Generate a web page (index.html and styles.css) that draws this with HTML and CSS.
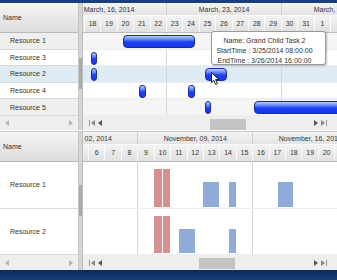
FILE: index.html
```html
<!DOCTYPE html>
<html>
<head>
<meta charset="utf-8">
<link rel="stylesheet" href="styles.css">
</head>
<body>
<div class="app">
  <div class="strip-top"></div>

  <div class="panel panel-top">
    <div class="grid">
      <div class="grid-head">Name</div>
      <div class="grid-rows">
        <div class="grid-row alt">Resource 1</div>
        <div class="grid-row">Resource 3</div>
        <div class="grid-row sel">Resource 2</div>
        <div class="grid-row">Resource 4</div>
        <div class="grid-row alt">Resource 5</div>
      </div>
      <div class="hscroll hscroll-top">
        <svg class="arr" width="4" height="6" viewBox="0 0 4 6"><path d="M4 0L0 3L4 6Z"/></svg>
        <svg class="arr" width="4" height="6" viewBox="0 0 4 6"><path d="M0 0L4 3L0 6Z"/></svg>
      </div>
    </div>
    <div class="vsplit"><div class="vthumb vthumb-top"></div></div>
    <div class="gantt">
      <div class="gview">
        <div class="track track-top">
          <div class="weeks">
            <div class="week">March, 16, 2014</div>
            <div class="week">March, 23, 2014</div>
            <div class="week">March, 30, 2014</div>
          </div>
          <div class="days">
            <div class="day">16</div><div class="day">17</div><div class="day">18</div><div class="day">19</div><div class="day">20</div><div class="day">21</div><div class="day">22</div>
            <div class="day">23</div><div class="day">24</div><div class="day">25</div><div class="day">26</div><div class="day">27</div><div class="day">28</div><div class="day">29</div>
            <div class="day">30</div><div class="day">31</div><div class="day">1</div><div class="day">2</div><div class="day">3</div><div class="day">4</div><div class="day">5</div>
          </div>
          <div class="gbody">
            <div class="grow alt">
              <div class="bar" style="left:71px;width:72px"></div>
            </div>
            <div class="grow">
              <div class="bar pill" style="left:39px;width:6px"></div>
            </div>
            <div class="grow sel">
              <div class="bar pill" style="left:39px;width:6px"></div>
              <div class="bar" style="left:153px;width:22px"></div>
            </div>
            <div class="grow">
              <div class="bar pill" style="left:87px;width:7px"></div>
              <div class="bar pill" style="left:136px;width:7px"></div>
            </div>
            <div class="grow alt">
              <div class="bar pill" style="left:153px;width:6px"></div>
              <div class="bar" style="left:202px;width:140px"></div>
            </div>
          </div>
        </div>
      </div>
      <div class="gscroll gscroll-top">
        <svg class="garr-l" width="14" height="6" viewBox="0 0 14 6"><rect x="0" y="0" width="1" height="6" fill="#9a9a9a"/><path d="M6 0L2 3L6 6Z" fill="#8a8a8a"/><path d="M13 0L9 3L13 6Z" fill="#555"/></svg>
        <div class="gthumb gthumb-top"></div>
        <svg class="garr-r" width="14" height="6" viewBox="0 0 14 6"><path d="M1 0L5 3L1 6Z" fill="#555"/><path d="M8 0L12 3L8 6Z" fill="#8a8a8a"/><rect x="13" y="0" width="1" height="6" fill="#9a9a9a"/></svg>
      </div>
    </div>
  </div>

  <div class="panel-gap"></div>

  <div class="panel panel-bottom">
    <div class="grid">
      <div class="grid-head">Name</div>
      <div class="grid-rows">
        <div class="grid-row">Resource 1</div>
        <div class="grid-row">Resource 2</div>
      </div>
      <div class="hscroll hscroll-bottom">
        <svg class="arr" width="4" height="6" viewBox="0 0 4 6"><path d="M4 0L0 3L4 6Z"/></svg>
        <svg class="arr" width="4" height="6" viewBox="0 0 4 6"><path d="M0 0L4 3L0 6Z"/></svg>
      </div>
    </div>
    <div class="vsplit"><div class="vthumb vthumb-bottom"></div></div>
    <div class="gantt">
      <div class="gview">
        <div class="track track-bottom">
          <div class="weeks">
            <div class="week">November, 02, 2014</div>
            <div class="week">November, 09, 2014</div>
            <div class="week">November, 16, 2014</div>
          </div>
          <div class="days">
            <div class="day">2</div><div class="day">3</div><div class="day">4</div><div class="day">5</div><div class="day">6</div><div class="day">7</div><div class="day">8</div>
            <div class="day">9</div><div class="day">10</div><div class="day">11</div><div class="day">12</div><div class="day">13</div><div class="day">14</div><div class="day">15</div>
            <div class="day">16</div><div class="day">17</div><div class="day">18</div><div class="day">19</div><div class="day">20</div><div class="day">21</div><div class="day">22</div>
          </div>
          <div class="gbody">
            <div class="grow">
              <div class="blk red" style="left:131px;width:7.5px;top:7px;bottom:1px"></div>
              <div class="blk red" style="left:140px;width:6.7px;top:7px;bottom:1px"></div>
              <div class="blk blue" style="left:180px;width:16px;top:20px;bottom:1px"></div>
              <div class="blk blue" style="left:205.7px;width:6.7px;top:20px;bottom:1px"></div>
              <div class="blk blue" style="left:254.4px;width:15.6px;top:20px;bottom:1px"></div>
            </div>
            <div class="grow">
              <div class="blk red" style="left:131px;width:7.5px;top:7px;bottom:1px"></div>
              <div class="blk red" style="left:140px;width:6.7px;top:7px;bottom:1px"></div>
              <div class="blk blue" style="left:156px;width:15.7px;top:20px;bottom:1px"></div>
              <div class="blk blue" style="left:205.7px;width:6.7px;top:20px;bottom:1px"></div>
            </div>
          </div>
        </div>
      </div>
      <div class="gscroll gscroll-bottom">
        <svg class="garr-l" width="14" height="6" viewBox="0 0 14 6"><rect x="0" y="0" width="1" height="6" fill="#9a9a9a"/><path d="M6 0L2 3L6 6Z" fill="#8a8a8a"/><path d="M13 0L9 3L13 6Z" fill="#555"/></svg>
        <div class="gthumb gthumb-bottom"></div>
        <svg class="garr-r" width="14" height="6" viewBox="0 0 14 6"><path d="M1 0L5 3L1 6Z" fill="#555"/><path d="M8 0L12 3L8 6Z" fill="#8a8a8a"/><rect x="13" y="0" width="1" height="6" fill="#9a9a9a"/></svg>
      </div>
    </div>
  </div>

  <div class="strip-bottom"></div>
</div>

<div class="tooltip">
  <div>Name: Grand Child Task 2</div>
  <div>StartTime : 3/25/2014 08:00:00</div>
  <div>EndTime : 3/26/2014 16:00:00</div>
</div>
<svg class="cursor" width="9" height="14" viewBox="0 0 9 14"><path d="M0.5 0.5L0.5 10.5L2.8 8.3L4.6 12.5L6.4 11.7L4.6 7.6L7.8 7.6Z" fill="#fff" stroke="#222" stroke-width="1" stroke-linejoin="round"/></svg>
</body>
</html>
```

FILE: styles.css
```css
* { box-sizing: border-box; }

body {
  margin: 0;
  width: 337px;
  height: 280px;
  overflow: hidden;
  position: relative;
  background: #fff;
  font-family: "Liberation Sans", Arial, sans-serif;
  font-size: 7px;
  color: #333;
}

.app {
  display: flex;
  flex-direction: column;
  height: 280px;
}

.strip-top {
  height: 3px;
  background: #1b3f7c;
}

.strip-bottom {
  height: 10px;
  background: linear-gradient(#0a2a60, #173d78);
}

.panel { display: flex; }
.panel-top { height: 127px; }
.panel-bottom { height: 138px; }

.panel-gap {
  height: 2px;
  background: #fff;
  border-bottom: 1px solid #c9c9c9;
}

/* left grid */
.grid {
  width: 78px;
  flex: none;
  display: flex;
  flex-direction: column;
  background: #fff;
}

.grid-head {
  height: 30px;
  flex: none;
  display: flex;
  align-items: center;
  padding-left: 3px;
  background: linear-gradient(#f6f6f6, #dcdcdc);
  border-bottom: 1px solid #b8b8b8;
}

.grid-rows {
  flex: 1;
  display: flex;
  flex-direction: column;
}

.grid-row {
  flex: 1;
  display: flex;
  align-items: center;
  padding-left: 10px;
  border-bottom: 1px solid #d9d9d9;
}

.grid-row.alt { background: #efefef; }
.grid-row.sel { background: #dfecf5; }

.hscroll {
  flex: none;
  display: flex;
  align-items: center;
  justify-content: space-between;
  padding: 0 5px;
  background: #eeeeee;
}
.hscroll-top { height: 14px; }
.hscroll-bottom { height: 15px; }
.arr { fill: #b4b4b4; }

/* splitter / vertical scrollbar */
.vsplit {
  width: 4px;
  flex: none;
  background: #d5d5d5;
  border-left: 1px solid #c6c6c6;
}
.vthumb {
  background: #aaaaaa;
  height: 31px;
}
.vthumb-top { margin-top: 55px; }
.vthumb-bottom { margin-top: 53px; }

/* gantt */
.gantt {
  flex: 1;
  min-width: 0;
  display: flex;
  flex-direction: column;
  border-left: 1px solid #bdbdbd;
}

.gview {
  flex: 1;
  overflow: hidden;
}

.track {
  width: 345px;
  height: 100%;
  display: flex;
  flex-direction: column;
}
.track-top { margin-left: -31px; }
.track-bottom { margin-left: -59.7px; }

.weeks {
  height: 13px;
  flex: none;
  display: flex;
  background: linear-gradient(#f4f4f4, #e4e4e4);
  border-bottom: 1px solid #fafafa;
}

.week {
  width: 115px;
  flex: none;
  text-align: center;
  line-height: 13px;
  white-space: nowrap;
  border-right: 1px solid #cfcfcf;
}

.days {
  height: 17px;
  flex: none;
  display: flex;
  border-bottom: 1px solid #bcbcbc;
}

.day {
  width: calc(115px / 7);
  flex: none;
  text-align: center;
  line-height: 16px;
  background: linear-gradient(#f3f3f3, #e0e0e0);
  border-right: 1px solid #fbfbfb;
}

.gbody {
  flex: 1;
  display: flex;
  flex-direction: column;
}

.grow {
  flex: 1;
  position: relative;
  background: repeating-linear-gradient(90deg, transparent 0 114px, #d6d6d6 114px 115px);
  border-bottom: 1px solid #ededed;
}
.grow.alt { background-color: #f5f5f5; }
.grow.sel { background-color: #dfecf5; }

.bar {
  position: absolute;
  top: 2px;
  height: 13px;
  border-radius: 4px;
  border: 1px solid #1a2c9a;
  background: linear-gradient(#b9cbff 0%, #6a88ff 30%, #1e3ff5 55%, #1838e6 100%);
}
.bar.pill { border-radius: 3px; }

.blk { position: absolute; }
.red { background: #d8908f; }
.blue { background: #8facd8; }

.gscroll {
  flex: none;
  display: flex;
  align-items: center;
  background: #eeeeee;
}
.gscroll-top { height: 14px; }
.gscroll-bottom { height: 15px; }

.garr-l { margin-left: 6px; flex: none; }
.garr-r { margin-left: auto; margin-right: 10px; flex: none; }

.gthumb {
  align-self: flex-end;
  height: 11px;
  width: 36px;
  background: #c3c3c3;
  flex: none;
}
.gthumb-top { margin-left: 107px; }
.gthumb-bottom { margin-left: 96px; margin-bottom: 1px; }

/* tooltip overlay */
.tooltip {
  position: absolute;
  left: 211px;
  top: 31px;
  width: 115px;
  height: 34px;
  padding: 4px 8px 0 0;
  background: #fff;
  border: 1px solid #9a9a9a;
  border-radius: 3px;
  box-shadow: 1px 1px 2px rgba(0, 0, 0, 0.25);
  text-align: center;
  line-height: 10px;
  white-space: nowrap;
  color: #333;
}

.cursor {
  position: absolute;
  left: 211px;
  top: 72px;
}
```
